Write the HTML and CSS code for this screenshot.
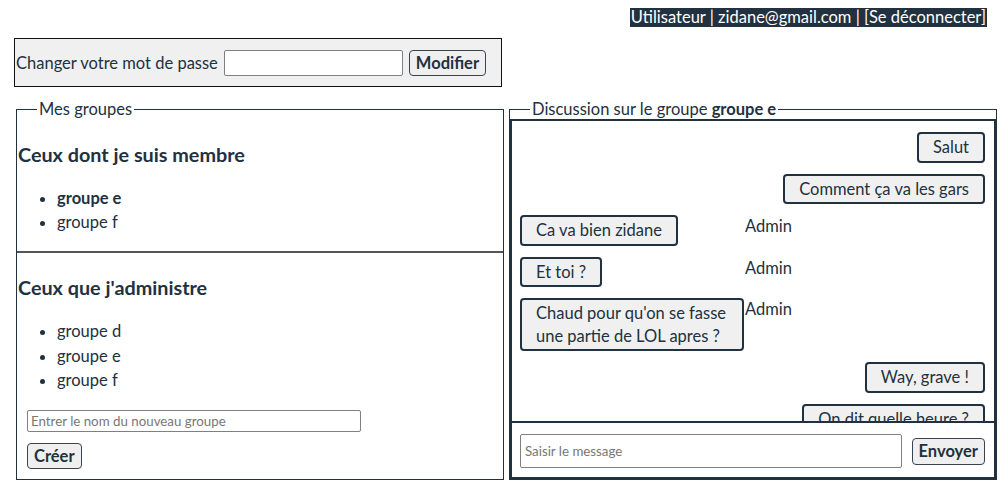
FILE: index.html
```html
<!DOCTYPE html>
<html lang="fr">
<head>
<meta charset="utf-8">
<title>Groupes</title>
<link rel="stylesheet" href="styles.css">
</head>
<body>
<div class="topbar"><span class="userinfo">Utilisateur | zidane@gmail.com | <a class="logout" href="#">[Se déconnecter]</a></span></div>

<form class="pwbox">
  <label class="pwlabel" for="pw">Changer votre mot de passe</label>
  <input class="pwinput" id="pw" type="password">
  <button class="btn" type="button">Modifier</button>
</form>

<div class="main">
  <fieldset class="panel groups">
    <legend class="legend">Mes groupes</legend>
    <section class="gsection">
      <h3 class="gtitle">Ceux dont je suis membre</h3>
      <ul class="glist">
        <li class="active">groupe e</li>
        <li>groupe f</li>
      </ul>
    </section>
    <section class="gsection admin">
      <h3 class="gtitle">Ceux que j'administre</h3>
      <ul class="glist wide">
        <li>groupe d</li>
        <li>groupe e</li>
        <li>groupe f</li>
      </ul>
      <input class="newgroup" type="text" placeholder="Entrer le nom du nouveau groupe">
      <button class="btn create" type="button">Créer</button>
    </section>
  </fieldset>

  <fieldset class="panel chat">
    <legend class="legend">Discussion sur le groupe <b>groupe e</b></legend>
    <div class="chatbox">
      <div class="messages">
        <div class="msg out"><span class="bubble">Salut</span></div>
        <div class="msg out"><span class="bubble">Comment ça va les gars</span></div>
        <div class="msg in"><div class="bcol"><span class="bubble">Ca va bien zidane</span></div><span class="author">Admin</span></div>
        <div class="msg in"><div class="bcol"><span class="bubble">Et toi ?</span></div><span class="author">Admin</span></div>
        <div class="msg in"><div class="bcol"><span class="bubble">Chaud pour qu'on se fasse une partie de LOL apres ?</span></div><span class="author">Admin</span></div>
        <div class="msg out"><span class="bubble">Way, grave !</span></div>
        <div class="msg out"><span class="bubble">On dit quelle heure ?</span></div>
      </div>
      <form class="sendbar">
        <input class="msginput" type="text" placeholder="Saisir le message">
        <button class="btn" type="button">Envoyer</button>
      </form>
    </div>
  </fieldset>
</div>
</body>
</html>
```
FILE: styles.css
```css
html, body {
  background: #fff;
}
body {
  margin: 8px;
  font-family: Lato, "Liberation Sans", sans-serif;
  font-size: 16.5px;
  color: #22313f;
}

.topbar {
  text-align: right;
  padding-right: 13px;
  line-height: 20px;
  height: 20px;
  margin-top: -1px;
}
.userinfo {
  background: #22313f;
  color: #fff;
  padding: 0 1px;
}
.logout {
  color: #fff;
  text-decoration: none;
}

.pwbox {
  box-sizing: border-box;
  width: 488px;
  height: 49px;
  margin: 11px 0 0 6px;
  border: 1px solid #111;
  background: #f0f0f0;
  display: flex;
  align-items: center;
  padding-left: 1px;
}
.pwlabel {
  margin-right: 6px;
}
.pwinput {
  box-sizing: border-box;
  width: 179px;
  height: 26px;
  border: 1px solid #808080;
  border-radius: 2px;
  background: #fff;
  margin: 0 6px 0 0;
}

.btn {
  font-family: Lato, "Liberation Sans", sans-serif;
  font-size: 16.5px;
  font-weight: bold;
  color: #22313f;
  background: #efefef;
  border: 1px solid #3a4350;
  border-radius: 4px;
  padding: 1px 6px;
  height: 26px;
  line-height: 20px;
}

.main {
  display: flex;
  gap: 5px;
  margin: 12px 0 0 8px;
}
.panel {
  box-sizing: border-box;
  width: 488px;
  margin: 0;
  padding: 0;
  border: 1px solid #22313f;
  min-width: 0;
}
.legend {
  margin-left: 20px;
  padding: 0 2px;
  line-height: 20px;
}

.gsection {
  padding: 0 0 0 1px;
}
.gtitle {
  font-size: 19.8px;
  line-height: 23px;
  margin: 24px 0 20px;
}
.glist {
  margin: 0 0 17px;
  padding-left: 39px;
  line-height: 24px;
}
.glist.wide {
  line-height: 24.5px;
}
.active {
  font-weight: bold;
}
.admin {
  border-top: 2px solid #555;
}
.admin .gtitle {
  margin-top: 23px;
}
.newgroup {
  display: block;
  box-sizing: border-box;
  width: 334px;
  height: 22px;
  margin: 17px 0 0 9px;
  padding: 1px 3px;
  border: 1px solid #808080;
  border-radius: 2px;
  font-family: Lato, "Liberation Sans", sans-serif;
  font-size: 13.3px;
  color: #22313f;
}
.newgroup::placeholder, .msginput::placeholder {
  color: #777;
}
.create {
  display: block;
  margin: 11px 0 0 9px;
}

.chatbox {
  border: 2px solid #22313f;
  display: flex;
  flex-direction: column;
  height: 360px;
  box-sizing: border-box;
}
.messages {
  height: 302px;
  overflow: hidden;
  padding: 11px 9px 0 8px;
  box-sizing: border-box;
  border-bottom: 2px solid #22313f;
  flex: none;
}
.msg {
  display: flex;
  align-items: flex-start;
  margin-bottom: 11px;
}
.msg.out {
  justify-content: flex-end;
}
.bcol {
  width: 225px;
  flex: none;
}
.bubble {
  display: inline-block;
  box-sizing: border-box;
  max-width: 224px;
  padding: 2px 14px;
  line-height: 22.5px;
  background: #f0f0f0;
  border: 2px solid #22313f;
  border-radius: 4px;
}
.author {
  line-height: 22px;
}
.sendbar {
  flex: 1;
  display: flex;
  align-items: center;
  gap: 10px;
  padding: 2px 9px 0 8px;
}
.msginput {
  box-sizing: border-box;
  flex: 1;
  height: 34px;
  padding: 1px 4px;
  border: 1px solid #808080;
  border-radius: 2px;
  font-family: Lato, "Liberation Sans", sans-serif;
  font-size: 13.3px;
  color: #22313f;
}
.sendbar .btn {
  height: 27px;
}
```
